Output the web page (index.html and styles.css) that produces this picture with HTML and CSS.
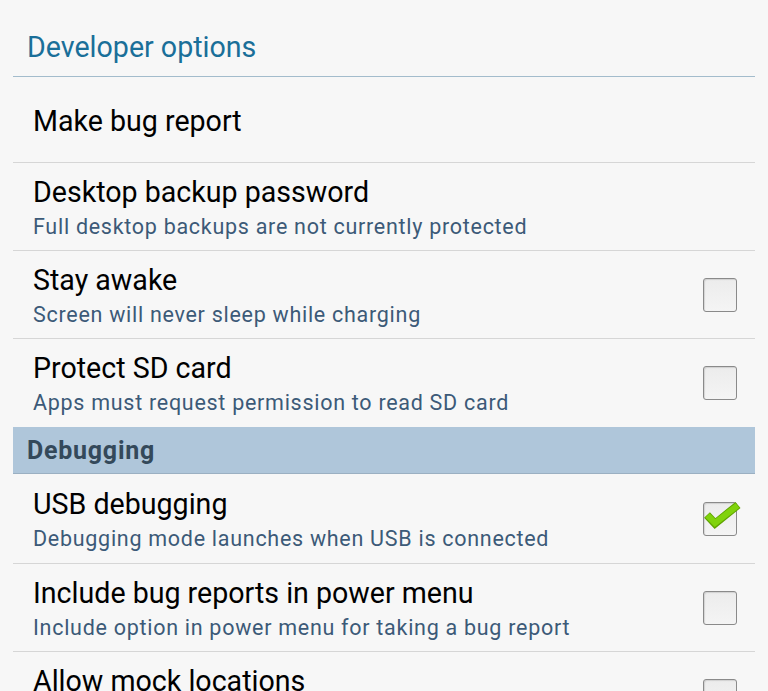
FILE: index.html
```html
<!DOCTYPE html>
<html>
<head>
<meta charset="utf-8">
<link rel="stylesheet" href="styles.css">
</head>
<body>
<div class="page">
  <div class="title">Developer options</div>
  <div class="row single">
    <div class="text"><div class="main">Make bug report</div></div>
  </div>
  <div class="row">
    <div class="text"><div class="main">Desktop backup password</div><div class="sub">Full desktop backups are not currently protected</div></div>
  </div>
  <div class="row">
    <div class="text"><div class="main">Stay awake</div><div class="sub">Screen will never sleep while charging</div></div>
    <div class="box"></div>
  </div>
  <div class="row last">
    <div class="text"><div class="main">Protect SD card</div><div class="sub">Apps must request permission to read SD card</div></div>
    <div class="box"></div>
  </div>
  <div class="section">Debugging</div>
  <div class="row first">
    <div class="text"><div class="main">USB debugging</div><div class="sub">Debugging mode launches when USB is connected</div></div>
    <div class="box">
      <svg class="check" width="40" height="34" viewBox="0 0 40 34"><path d="M3 12 L11 20.5 L34 2" fill="none" stroke="#5fa300" stroke-width="8" stroke-linejoin="miter" stroke-linecap="butt"/><path d="M3.5 12.3 L11 20 L33.5 2.5" fill="none" stroke="#80d30c" stroke-width="6" stroke-linejoin="miter" stroke-linecap="butt"/></svg>
    </div>
  </div>
  <div class="row">
    <div class="text"><div class="main">Include bug reports in power menu</div><div class="sub">Include option in power menu for taking a bug report</div></div>
    <div class="box"></div>
  </div>
  <div class="row">
    <div class="text"><div class="main">Allow mock locations</div><div class="sub">Allow mock locations</div></div>
    <div class="box"></div>
  </div>
</div>
</body>
</html>
```
FILE: styles.css
```css
html, body {
  margin: 0;
  padding: 0;
  background: #f7f7f7;
  overflow: hidden;
}
body {
  font-family: Roboto, "Noto Sans", sans-serif;
  height: 691px;
}
.page {
  margin: 0 13px;
}
.title {
  height: 77px;
  border-bottom: 1px solid #a3bccc;
  color: #1a6f99;
  font-size: 28.6px;
  line-height: 34px;
  padding: 30px 0 0 14px;
  box-sizing: border-box;
}
.row {
  height: 88px;
  border-bottom: 1px solid #d6d6d6;
  display: flex;
  align-items: center;
  padding-left: 20px;
  padding-right: 18px;
  box-sizing: border-box;
}
.row.single { height: 86px; }
.row.last { border-bottom: none; }
.row.first { height: 90px; }
.text {
  flex: 1;
  align-self: flex-start;
  padding-top: 12px;
}
.single .text { padding-top: 27px; }
.first .text { padding-top: 13px; }
.main {
  font-size: 28.6px;
  color: #000;
  line-height: 34px;
  white-space: nowrap;
}
.sub {
  font-size: 21.5px;
  letter-spacing: 0.72px;
  color: #3c5a78;
  line-height: 36px;
  white-space: nowrap;
}
.section {
  height: 47px;
  background: #afc6da;
  border-bottom: 1px solid #9bb0c2;
  box-sizing: border-box;
  color: #34495a;
  font-weight: bold;
  font-size: 25px;
  letter-spacing: 0.75px;
  padding-left: 14px;
  line-height: 48px;
}
.box {
  width: 34px;
  height: 34px;
  box-sizing: border-box;
  border: 1px solid #8a8a8a;
  border-radius: 3px;
  background: linear-gradient(#ececec, #f4f4f4);
  box-shadow: inset 1px 1px 1px rgba(0,0,0,0.12);
  position: relative;
}
.check {
  position: absolute;
  left: 0;
  top: 0;
  overflow: visible;
}
```
